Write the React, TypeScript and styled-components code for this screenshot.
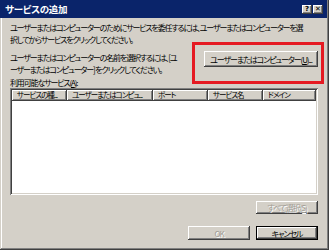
import React from "react";
import styled, { createGlobalStyle } from "styled-components";

const Global = createGlobalStyle`
  html, body { margin: 0; padding: 0; background: #d4d0c8; }
  body {
    font-family: "Noto Sans CJK JP", "Noto Sans", sans-serif;
    font-feature-settings: "palt";
  }
`;

const Dialog = styled.div`
  width: 329px;
  height: 250px;
  box-sizing: border-box;
  background: #d4d0c8;
  display: flex;
  flex-direction: column;
  box-shadow: inset -1px -1px #404040, inset 1px 0 #d4d0c8, inset -2px -2px #808080, inset 2px 0 #ffffff;
  overflow: hidden;
`;

const TitleBar = styled.div`
  height: 18px;
  flex: none;
  margin-right: 2px;
  background: #0a246a;
  display: flex;
  align-items: center;
  padding: 0 4px 0 5px;
`;

const Title = styled.div`
  flex: 1;
  color: #ffffff;
  font-size: 9.5px;
  font-weight: 700;
  letter-spacing: -0.3px;
`;

const CapButton = styled.div`
  width: 10px;
  height: 9px;
  margin-left: 1px;
  background: #d4d0c8;
  box-shadow: inset -1px -1px #404040, inset 1px 1px #ffffff, inset -2px -2px #808080;
  display: flex;
  align-items: center;
  justify-content: center;
  font-family: "DejaVu Sans", sans-serif;
  font-size: 7px;
  font-weight: 700;
  color: #000;
  line-height: 1;
`;

const Body = styled.div`
  flex: 1;
  display: flex;
  flex-direction: column;
  padding: 4px 11px 0 10px;
`;

const Text = styled.div`
  font-size: 8px;
  line-height: 12px;
  color: #000;
  white-space: nowrap;
  letter-spacing: -1.15px;
`;

const Row = styled.div`
  display: flex;
  align-items: flex-start;
  justify-content: space-between;
  margin-top: 6px;
`;

const Highlight = styled.div`
  position: relative;
  margin-top: -1px;
`;

const RedBox = styled.div`
  position: absolute;
  left: -12px;
  top: -9px;
  right: -6px;
  bottom: -17px;
  border: 3px solid #e51a22;
  pointer-events: none;
`;

const Button = styled.div<{ $w: number; $h?: number; $disabled?: boolean; $default?: boolean }>`
  width: ${(p) => p.$w}px;
  height: ${(p) => p.$h ?? 14}px;
  box-sizing: border-box;
  background: #d4d0c8;
  display: flex;
  align-items: center;
  justify-content: center;
  font-size: 8px;
  white-space: nowrap;
  letter-spacing: -1.1px;
  color: ${(p) => (p.$disabled ? "#a09c94" : "#000")};
  text-shadow: ${(p) => (p.$disabled ? "1px 1px #ffffff" : "none")};
  box-shadow: ${(p) =>
    p.$default
      ? "inset 0 0 0 1px #000, inset -2px -2px #404040, inset 2px 2px #ffffff, inset -3px -3px #808080"
      : "inset -1px -1px #404040, inset 1px 1px #ffffff, inset -2px -2px #808080"};
`;

const Label = styled(Text)`
  line-height: 11px;
  margin-top: 1px;
`;

const ListBox = styled.div`
  height: 107px;
  flex: none;
  background: #ffffff;
  box-shadow: inset 1px 1px #808080, inset -1px -1px #ffffff, inset 2px 2px #404040, inset -2px -2px #d4d0c8;
  padding: 2px;
  box-sizing: border-box;
`;

const Header = styled.div`
  display: flex;
  height: 11px;
`;

const HeadCell = styled.div<{ $w: number }>`
  width: ${(p) => p.$w}px;
  flex: none;
  box-sizing: border-box;
  background: #d4d0c8;
  box-shadow: inset -1px -1px #404040, inset 1px 1px #ffffff, inset -2px -2px #808080;
  font-size: 7.5px;
  line-height: 10px;
  padding-left: 5px;
  white-space: nowrap;
  overflow: hidden;
  letter-spacing: -1px;
`;

const SelectRow = styled.div`
  display: flex;
  justify-content: flex-end;
  margin-top: 6px;
`;

const Footer = styled.div`
  display: flex;
  justify-content: flex-end;
  gap: 6px;
  margin-top: 12px;
`;

const cols: [string, number][] = [
  ["サービスの種...", 55],
  ["ユーザーまたはコンピュ...", 86],
  ["ポート", 55],
  ["サービス名", 55],
  ["ドメイン", 53],
];

export default function App() {
  return (
    <>
      <Global />
      <Dialog>
        <TitleBar>
          <Title>サービスの追加</Title>
          <CapButton>?</CapButton>
          <CapButton>✕</CapButton>
        </TitleBar>
        <Body>
          <Text>
            ユーザーまたはコンピューターのためにサービスを委任するには、ユーザーまたはコンピューターを選
            <br />
            択してからサービスをクリックしてください。
          </Text>
          <Row>
            <Text>
              ユーザーまたはコンピューターの名前を選択するには、[ユ
              <br />
              ーザーまたはコンピューター] をクリックしてください。
            </Text>
            <Highlight>
              <Button $w={114} $h={16}>
                ユーザーまたはコンピューター(<u>U</u>)...
              </Button>
              <RedBox />
            </Highlight>
          </Row>
          <Label>
            利用可能なサービス(<u>A</u>):
          </Label>
          <ListBox>
            <Header>
              {cols.map(([t, w]) => (
                <HeadCell key={t} $w={w}>
                  {t}
                </HeadCell>
              ))}
            </Header>
          </ListBox>
          <SelectRow>
            <Button $w={62} $h={13} $disabled>
              すべて選択(<u>S</u>)
            </Button>
          </SelectRow>
          <Footer>
            <Button $w={62} $disabled>
              OK
            </Button>
            <Button $w={62} $default>
              キャンセル
            </Button>
          </Footer>
        </Body>
      </Dialog>
    </>
  );
}
